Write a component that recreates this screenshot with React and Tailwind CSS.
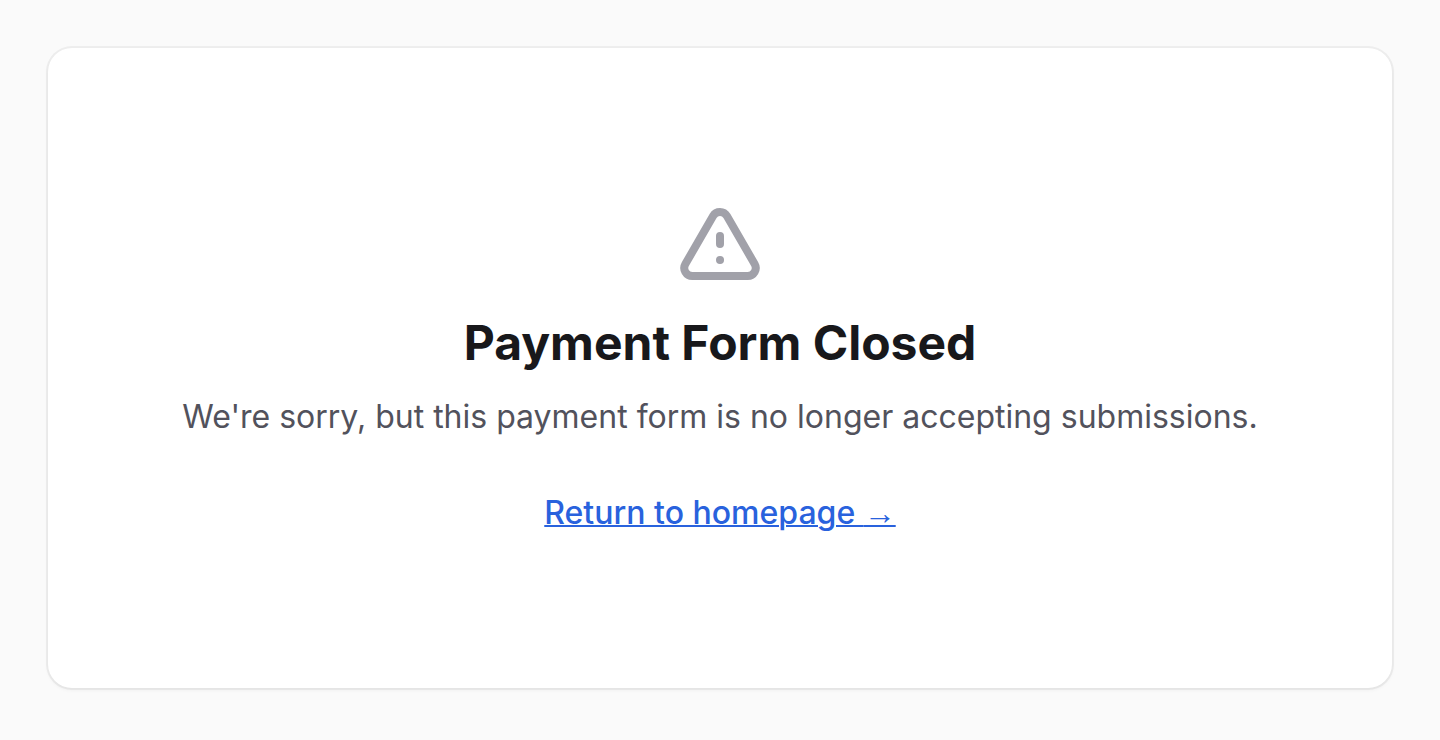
import React from 'react';

const WarningIcon = ({ className }) => (
  <svg
    className={className}
    viewBox="0 0 24 24"
    fill="none"
    stroke="currentColor"
    strokeWidth={2}
    strokeLinecap="round"
    strokeLinejoin="round"
    aria-hidden="true"
  >
    <path d="M12 9v2m0 4h.01m-6.938 4h13.856c1.54 0 2.502-1.667 1.732-3L13.732 4c-.77-1.333-2.694-1.333-3.464 0L3.34 16c-.77 1.333.192 3 1.732 3z" />
  </svg>
);

const App = () => {
  return (
    <div className="min-h-screen bg-[#fafafa] p-12 pb-13 font-['Inter',sans-serif]">
      <main className="flex min-h-160 flex-col items-center rounded-3xl bg-white px-12 pt-38 pb-12 text-center shadow-[0_2px_4px_rgba(0,0,0,0.05),0_0_0_2px_rgba(24,24,27,0.05)]">
        <WarningIcon className="mb-[17px] h-24 w-24 text-[#a1a1a9]" />
        <h1 className="mb-5 text-5xl leading-15 font-bold text-zinc-900">
          Payment Form Closed
        </h1>
        <p className="mb-12 text-[32px] leading-12 text-zinc-600">
          We're sorry, but this payment form is no longer accepting submissions.
        </p>
        <a href="/" className="text-[32px] leading-12 font-medium text-[#2962dd] underline decoration-2">
          Return to homepage <span className="font-['Liberation_Sans',sans-serif] font-normal">→</span>
        </a>
      </main>
    </div>
  );
};

export default App;
